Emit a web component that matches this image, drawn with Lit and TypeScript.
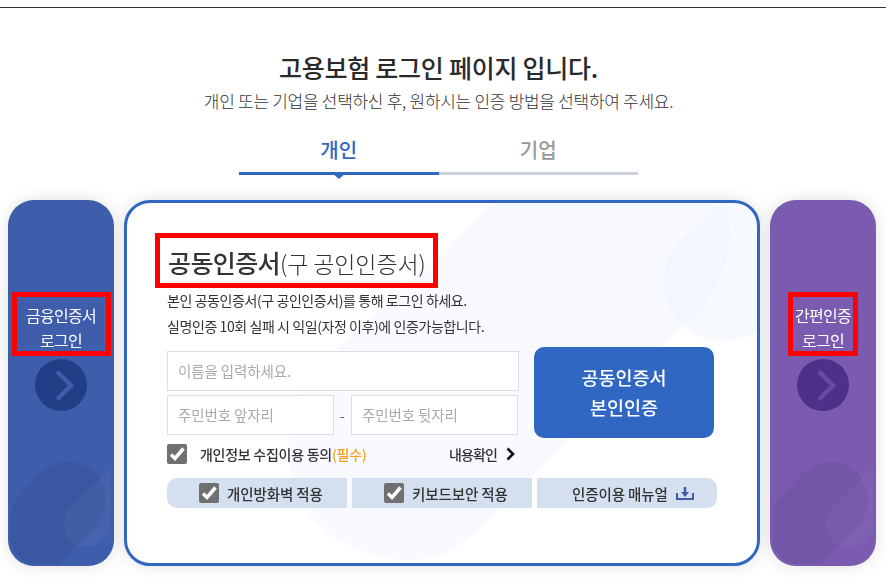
import { LitElement, html, css, svg } from "lit";
import { customElement } from "lit/decorators.js";

const check = html`<svg class="ck" viewBox="0 0 20 20"><rect width="20" height="20" rx="2" fill="#707070"/><path d="M4 10.500l4 4 8.500-10" fill="none" stroke="#fff" stroke-width="3.500"/></svg>`;

const sideDeco = svg`<svg class="deco" viewBox="0 0 106 366">
  <path d="M3 305 L33 273 A38 38 0 0 1 87 327 L50 364 H28 A25 25 0 0 1 3 340 Z" fill="#000" fill-opacity=".05"/>
  <path d="M103 267.400 L62.700 307.700 A23 23 0 0 0 95.300 340.300 L103 332.600 Z" fill="#fff" fill-opacity=".04"/>
</svg>`;

@customElement("app-root")
export class AppRoot extends LitElement {
  static styles = css`
    :host { display: block; width: 886px; height: 577px; overflow: hidden; background: #fff;
      font-family: "Noto Sans CJK KR", "Noto Sans", sans-serif; color: #333; }
    .top { height: 7px; border-bottom: 1px solid #333; }
    .head { display: flex; flex-direction: column; align-items: center; height: 192px; width: 877px; }
    h1 { margin: 41px 0 0; font-size: 25px; line-height: 36px; font-weight: 500; color: #2a2a2a; letter-spacing: -.25px; }
    .sub { margin: 2px 0 0; font-size: 17px; line-height: 28px; font-weight: 300; color: #333; letter-spacing: -.28px; white-space: nowrap; }
    .tabs { display: flex; width: 399px; margin-top: 16px; }
    .tab { flex: 1; height: 44px; box-sizing: border-box; text-align: center; font-size: 20px; line-height: 38px; font-weight: 500; color: #999; border-bottom: 3px solid #ccd2dc; position: relative; }
    .tab.on { color: #2f67c3; border-color: #2f67c3; }
    .tab.on::after { content: ""; position: absolute; left: 50%; margin-left: -8px; top: 41px; border: 8px solid transparent; border-top: 7px solid #2f67c3; border-bottom: 0; }
    .row { display: flex; gap: 10px; padding: 0 10px 0 8px; height: 366px; filter: drop-shadow(0 0 8px rgba(0,0,0,.12)); }
    .side { width: 106px; height: 366px; border-radius: 26px; position: relative; overflow: hidden; color: #fff; flex: none; display: flex; flex-direction: column; align-items: center; }
    .side.blue { background: #3e5dab; }
    .side.purple { background: #7a5bb0; }
    .deco { position: absolute; left: 0; top: 0; width: 106px; height: 366px; }
    .lbl { margin-top: 92px; box-sizing: border-box; border: 5px solid #f00; font-size: 16px; line-height: 25px; font-weight: 400; text-align: center; height: 64px; padding-top: 6px; position: relative; white-space: nowrap; letter-spacing: -.7px; }
    .blue .lbl { width: 99px; }
    .purple .lbl { width: 70px; }
    .go { width: 52px; height: 52px; margin-top: 3px; border-radius: 50%; position: relative; flex: none; }
    .blue .go { background: #213f87; }
    .purple .go { background: #4d3088; }
    .go svg { display: block; width: 52px; height: 52px; }
    .blue .go path { stroke: #3e5dab; }
    .purple .go path { stroke: #6a49a6; }
    .card { flex: 1; height: 366px; box-sizing: border-box; border: 3px solid #2f67c3; border-radius: 26px; background: #fff; position: relative; overflow: hidden; padding: 30px 39px 0 40px; }
    .bg { position: absolute; left: 0; top: 0; width: 630px; height: 360px; }
    .content { position: relative; }
    .title { box-sizing: border-box; width: 283px; height: 55px; border: 5px solid #f00; padding: 4px 0 0 8px; font-size: 25px; line-height: 40px; font-weight: 500; color: #333; white-space: nowrap; margin-left: -12px; letter-spacing: -.6px; }
    .title span { font-weight: 300; font-size: 23px; color: #333; letter-spacing: -.1px; }
    .desc { margin: -1px 0 0; font-size: 14px; line-height: 26px; font-weight: 400; color: #333; letter-spacing: -.42px; white-space: nowrap; }
    .form { display: flex; gap: 15px; margin-top: 12px; }
    .fields { width: 352px; display: flex; flex-direction: column; gap: 4px; }
    .input { box-sizing: border-box; height: 40px; border: 1px solid #ddd; background: #fff; padding-left: 10px; font-size: 14.5px; line-height: 38px; color: #aaa; font-weight: 400; letter-spacing: -.1px; white-space: nowrap; }
    .jumin { display: flex; align-items: center; }
    .jumin .input { width: 167px; }
    .dash { width: 17px; text-align: center; font-size: 14px; color: #555; flex: none; }
    .btn { width: 180px; height: 91px; margin: -4px 0 -3px; border-radius: 10px; background: #2f67c3; color: #fff; text-align: center; font-size: 18.5px; line-height: 30px; font-weight: 500; padding-top: 15px; box-sizing: border-box; }
    .ck { width: 20px; height: 20px; display: block; flex: none; }
    .agree { display: flex; align-items: center; width: 352px; margin-top: 9px; height: 20px; font-size: 14px; font-weight: 500; color: #333; letter-spacing: -.27px; white-space: nowrap; }
    .agree .t { margin-left: 13px; }
    .agree b { font-weight: 500; color: #f7a31c; }
    .more { margin-left: auto; display: flex; align-items: center; gap: 9px; letter-spacing: -.85px; margin-right: 4px; }
    .opts { display: flex; gap: 5px; margin-top: 14px; width: 550px; }
    .opt { flex: 0 0 180px; box-sizing: border-box; height: 30px; background: #d4dff0; display: flex; align-items: center; gap: 8px; padding-left: 32px; font-size: 14.5px; font-weight: 500; color: #333; white-space: nowrap; letter-spacing: -.1px; }
    .opt:first-child { border-radius: 10px 0 0 10px; }
    .opt:last-child { border-radius: 0 10px 10px 0; padding-left: 35px; }
    .dl { width: 18px; height: 14px; display: block; }
  `;

  private side(kind: string, a: string) {
    return html`<div class="side ${kind}">
      ${sideDeco}
      <div class="lbl">${a}<br />로그인</div>
      <div class="go"><svg viewBox="0 0 52 52"><path d="M22 12.500L36 26.500 22 40.500" fill="none" stroke-width="4.500"/></svg></div>
    </div>`;
  }

  render() {
    return html`
      <div class="top"></div>
      <div class="head">
        <h1>고용보험 로그인 페이지 입니다.</h1>
        <p class="sub">개인 또는 기업을 선택하신 후, 원하시는 인증 방법을 선택하여 주세요.</p>
        <div class="tabs"><div class="tab on">개인</div><div class="tab">기업</div></div>
      </div>
      <div class="row">
        ${this.side("blue", "금융인증서")}
        <div class="card">
          <svg class="bg" viewBox="0 0 630 360">
            <path d="M366 0 L190 165 C160 195 155 250 170 290 C190 345 290 385 345 333 L575 105 C600 70 610 40 598 0 Z" fill="#f9faff"/>
            <path d="M596 0 L550 40 A60 60 0 0 0 635 124 L640 0 Z" fill="#e6eefb" fill-opacity=".35"/>
          </svg>
          <div class="content">
            <div class="title">공동인증서<span>(구 공인인증서)</span></div>
            <p class="desc">본인 공동인증서(구 공인인증서)를 통해 로그인 하세요.<br />실명인증 10회 실패 시 익일(자정 이후)에 인증가능합니다.</p>
            <div class="form">
              <div class="fields">
                <div class="input">이름을 입력하세요.</div>
                <div class="jumin"><div class="input">주민번호 앞자리</div><div class="dash">-</div><div class="input">주민번호 뒷자리</div></div>
              </div>
              <div class="btn">공동인증서<br />본인인증</div>
            </div>
            <div class="agree">${check}<span class="t">개인정보 수집이용 동의<b>(필수)</b></span>
              <span class="more">내용확인 <svg width="9" height="14" viewBox="0 0 9 14"><path d="M1.500 1.500L7 7l-5.500 5.500" fill="none" stroke="#111" stroke-width="2.600"/></svg></span></div>
            <div class="opts">
              <div class="opt">${check}개인방화벽 적용</div>
              <div class="opt">${check}키보드보안 적용</div>
              <div class="opt">인증이용 매뉴얼 <svg class="dl" viewBox="0 0 18 14"><path d="M1 7v6h16V7" fill="none" stroke="#3e5dab" stroke-width="2"/><path d="M9 1v6" stroke="#3e5dab" stroke-width="2.500"/><path d="M5 6h8l-4 5z" fill="#3e5dab"/></svg></div>
            </div>
          </div>
        </div>
        ${this.side("purple", "간편인증")}
      </div>
    `;
  }
}
